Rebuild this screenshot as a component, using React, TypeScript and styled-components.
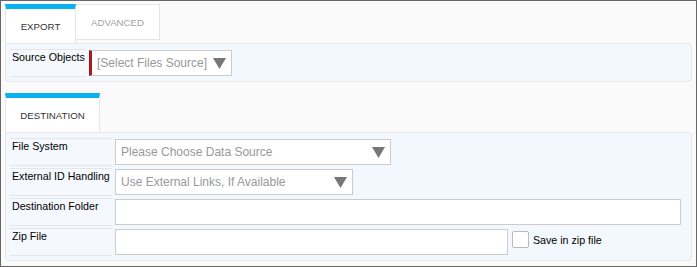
import React from 'react'
import styled, { createGlobalStyle } from 'styled-components'

const GlobalStyle = createGlobalStyle`
  html, body {
    margin: 0;
    padding: 0;
    background: #fafafa;
  }
  * {
    box-sizing: border-box;
  }
`

const Frame = styled.div`
  width: 697px;
  height: 267px;
  border: 1px solid #666;
  background: #fafafa;
  padding: 3px 4px 0 4px;
  font-family: 'Liberation Sans', Arial, sans-serif;
  display: flex;
  flex-direction: column;
`

const Section = styled.div<{ $gap?: number }>`
  display: flex;
  flex-direction: column;
  margin-top: ${(p) => p.$gap || 0}px;
`

const TabBar = styled.div`
  display: flex;
  align-items: flex-start;
`

const Tab = styled.div<{ $active?: boolean; $width: number }>`
  width: ${(p) => p.$width}px;
  height: ${(p) => (p.$active ? 39 : 36)}px;
  background: #fff;
  border: 1px solid #e6e6e6;
  border-top: ${(p) => (p.$active ? '5px solid #0bb0ee' : '1px solid #e6e6e6')};
  border-bottom: ${(p) => (p.$active ? 'none' : '1px solid #e6e6e6')};
  border-left-width: ${(p) => (p.$active ? 1 : 0)}px;
  color: ${(p) => (p.$active ? '#333' : '#a3a3a3')};
  font-size: 9.7px;
  text-transform: uppercase;
  display: flex;
  align-items: center;
  justify-content: center;
  margin-bottom: ${(p) => (p.$active ? 0 : 3)}px;
`

const Panel = styled.div<{ $top: number }>`
  background: #f3f8fe;
  border: 1px solid #e6e6e6;
  border-radius: 0 4px 4px 4px;
  padding: ${(p) => p.$top}px 10px 4px 4px;
  display: flex;
  flex-direction: column;
  gap: 2px;
`

const Row = styled.div`
  display: flex;
  align-items: flex-start;
  gap: 3px;
  height: 28px;
`

const Label = styled.div<{ $width: number }>`
  width: ${(p) => p.$width}px;
  height: 28px;
  flex: none;
  white-space: nowrap;
  border-top: 1px solid #e6e6e6;
  border-bottom: 1px solid #e6e6e6;
  background: #f5f9ff;
  padding: 1px 2px;
  font-size: 10.67px;
  line-height: 13px;
  color: #000;
`

const SelectBox = styled.div<{ $width: number; $required?: boolean }>`
  width: ${(p) => p.$width}px;
  height: 26px;
  margin-top: 1px;
  background: #fff;
  border: 1px solid #ccc;
  border-left: ${(p) => (p.$required ? '3px solid #a8191c' : '1px solid #ccc')};
  padding: 0 5px 0 ${(p) => (p.$required ? 5 : 5)}px;
  display: flex;
  align-items: center;
  justify-content: space-between;
  font-size: 12px;
  color: #999;
`

const TextField = styled.div<{ $width?: number }>`
  height: 26px;
  margin-top: 1px;
  background: #fff;
  border: 1px solid #ccc;
  ${(p) => (p.$width ? `width: ${p.$width}px;` : 'flex: 1;')}
`

const CheckRow = styled.label`
  display: flex;
  align-items: center;
  gap: 4px;
  margin-top: 3px;
  margin-left: 1px;
  font-size: 10.67px;
  color: #000;
`

const Box = styled.span`
  width: 17px;
  height: 17px;
  border: 1px solid #bbb;
  border-radius: 2px;
  background: #fff;
`

const Caret = () => (
  <svg width="13" height="11" viewBox="0 0 13 11">
    <polygon points="0,0 13,0 6.5,11" fill="#777" />
  </svg>
)

const Select = ({ text, width, required }: { text: string; width: number; required?: boolean }) => (
  <SelectBox $width={width} $required={required}>
    <span>{text}</span>
    <Caret />
  </SelectBox>
)

const App = () => (
  <>
    <GlobalStyle />
    <Frame>
      <Section>
        <TabBar>
          <Tab $active $width={71}>Export</Tab>
          <Tab $width={84}>Advanced</Tab>
        </TabBar>
        <Panel $top={5}>
          <Row>
            <Label $width={76}>Source Objects</Label>
            <Select text="[Select Files Source]" width={143} required />
          </Row>
        </Panel>
      </Section>

      <Section $gap={11}>
        <TabBar>
          <Tab $active $width={95}>Destination</Tab>
        </TabBar>
        <Panel $top={5}>
          <Row>
            <Label $width={102}>File System</Label>
            <Select text="Please Choose Data Source" width={276} />
          </Row>
          <Row>
            <Label $width={102}>External ID Handling</Label>
            <Select text="Use External Links, If Available" width={238} />
          </Row>
          <Row>
            <Label $width={102}>Destination Folder</Label>
            <TextField />
          </Row>
          <Row>
            <Label $width={102}>Zip File</Label>
            <TextField $width={393} />
            <CheckRow>
              <Box />
              Save in zip file
            </CheckRow>
          </Row>
        </Panel>
      </Section>
    </Frame>
  </>
)

export default App
